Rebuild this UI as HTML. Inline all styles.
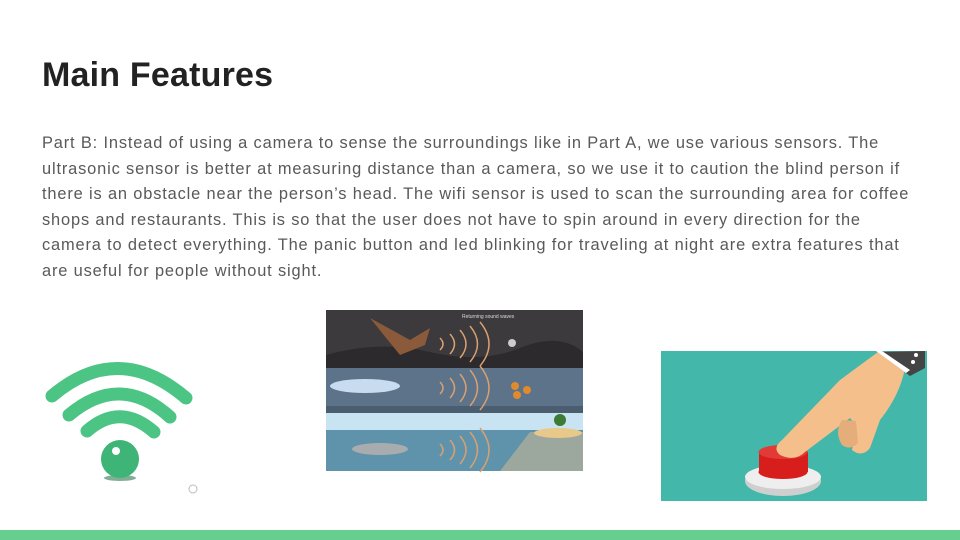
<!DOCTYPE html>
<html><head><style>
body{margin:0;width:960px;height:540px;overflow:hidden;background:#fff;position:relative;font-family:"Liberation Sans",sans-serif}
h1{position:absolute;left:42px;top:56px;margin:0;font-size:34px;font-weight:bold;color:#222;letter-spacing:0.2px}
p{position:absolute;left:42px;top:131px;margin:0;font-size:16.4px;line-height:25.6px;color:#595959;white-space:nowrap;letter-spacing:0.85px}
.bar{position:absolute;left:0;top:530px;width:960px;height:10px;background:#66cf90}
</style></head><body>
<h1>Main Features</h1>
<p>Part B: Instead of using a camera to sense the surroundings like in Part A, we use various sensors. The<br>ultrasonic sensor is better at measuring distance than a camera, so we use it to caution the blind person if<br>there is an obstacle near the person’s head. The wifi sensor is used to scan the surrounding area for coffee<br>shops and restaurants. This is so that the user does not have to spin around in every direction for the<br>camera to detect everything. The panic button and led blinking for traveling at night are extra features that<br>are useful for people without sight.</p>

<svg style="position:absolute;left:0;top:0" width="960" height="540">
 <g fill="none" stroke="#4cc584" stroke-width="13" stroke-linecap="round">
  <path d="M52 396 Q118 340 186 398"/>
  <path d="M69 415 Q120 372 170 417"/>
  <path d="M87 431 Q120 402 154 432"/>
 </g>
 <ellipse cx="120" cy="478" rx="16" ry="3" fill="#2b7a4f" opacity=".6"/>
 <circle cx="120" cy="459" r="19" fill="#3fb477"/>
 <circle cx="116" cy="451" r="4" fill="#fff"/>
 <circle cx="193" cy="489" r="4" fill="none" stroke="#bbb" stroke-width="1"/>

 <rect x="326" y="310" width="257" height="58" fill="#3c3a3c"/>
 <path d="M326 355 Q380 340 430 352 T520 348 T583 352 V368 H326Z" fill="#2c2a2c"/>
 <rect x="326" y="368" width="257" height="45" fill="#5c7389"/>
 <rect x="326" y="406" width="257" height="7" fill="#4a5e70"/>
 <rect x="326" y="413" width="257" height="17" fill="#c8e4f2"/>
 <rect x="326" y="430" width="257" height="41" fill="#5f93ac"/>
 <path d="M500 471 L530 432 L583 432 V471Z" fill="#9ca89e"/>
 <ellipse cx="558" cy="433" rx="24" ry="5" fill="#e8c98a"/>
 <circle cx="560" cy="420" r="6" fill="#3d7a33"/>
 <path d="M370 318 L410 340 L430 328 L425 345 L400 355 Z" fill="#8a5a3a"/>
 <ellipse cx="365" cy="386" rx="35" ry="7" fill="#c9dbee"/>
 <ellipse cx="380" cy="449" rx="28" ry="6" fill="#a8acae"/>
 <g fill="none" stroke="#d9a070" stroke-width="1.5">
  <path d="M440 338 q6 6 0 12 M450 334 q9 10 0 20 M460 330 q12 14 0 28 M470 326 q15 18 0 36 M480 322 q18 22 0 44"/>
  <path d="M440 382 q6 6 0 12 M450 378 q9 10 0 20 M460 374 q12 14 0 28 M470 370 q15 18 0 36 M480 366 q18 22 0 44"/>
  <path d="M440 444 q6 6 0 12 M450 440 q9 10 0 20 M460 436 q12 14 0 28 M470 432 q15 18 0 36 M480 428 q18 22 0 44"/>
 </g>
 <circle cx="512" cy="343" r="4" fill="#ccc"/>
 <circle cx="515" cy="386" r="4" fill="#e08a30"/><circle cx="527" cy="390" r="4" fill="#e08a30"/><circle cx="517" cy="395" r="4" fill="#e08a30"/>
 <text x="462" y="318" font-size="5" fill="#ddd" font-family="Liberation Sans">Returning sound waves</text>

 <rect x="661" y="351" width="266" height="150" fill="#43b7aa"/>
 <ellipse cx="783" cy="481" rx="38" ry="15" fill="#cfcfcf"/>
 <ellipse cx="783" cy="477" rx="38" ry="12" fill="#eeeeee"/>
 <rect x="759" y="452" width="49" height="20" fill="#d81e1c"/>
 <ellipse cx="783" cy="472" rx="24.5" ry="7" fill="#d81e1c"/>
 <ellipse cx="783" cy="452" rx="24.5" ry="7" fill="#e23a36"/>
 <path d="M780 455 Q772 448 782 440 L840 380 L878 352 L905 368 Q900 395 880 420 L870 448 Q862 458 852 450 L856 425 L850 418 L805 452 Q795 462 780 455Z" fill="#f5bf8c"/>
 <path d="M842 420 q-8 12 0 25 q8 6 16 -2 l-2 -22z" fill="#e5ad7a"/>
 <path d="M878 352 L925 351 L925 368 L910 376Z" fill="#444"/>
 <path d="M876 351 L906 373 L910 370 L882 351Z" fill="#fff"/>
 <circle cx="916" cy="355" r="2" fill="#fff"/><circle cx="913" cy="362" r="2" fill="#fff"/>
</svg>
<div class="bar"></div>
</body></html>
